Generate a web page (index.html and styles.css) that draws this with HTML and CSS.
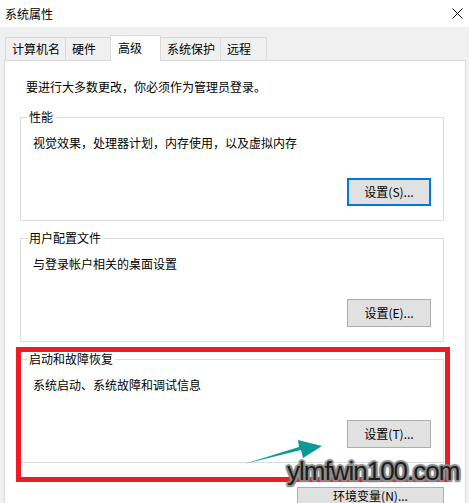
FILE: index.html
```html
<!DOCTYPE html>
<html lang="zh-CN">
<head>
<meta charset="utf-8">
<title>系统属性</title>
<link rel="stylesheet" href="styles.css">
</head>
<body>
<div class="window">
  <div class="titlebar">
    <span class="title">系统属性</span>
    <svg class="close" width="11" height="11" viewBox="0 0 11 11"><path d="M0.5 0.5 L10.5 10.5 M10.5 0.5 L0.5 10.5" stroke="#000" stroke-width="1" fill="none"/></svg>
  </div>
  <div class="content">
    <div class="tabs">
      <div class="tab">计算机名</div>
      <div class="tab">硬件</div>
      <div class="tab selected">高级</div>
      <div class="tab">系统保护</div>
      <div class="tab">远程</div>
    </div>
    <div class="panel">
      <p class="intro">要进行大多数更改，你必须作为管理员登录。</p>
      <div class="group">
        <span class="legend">性能</span>
        <p class="desc">视觉效果，处理器计划，内存使用，以及虚拟内存</p>
        <div class="actions"><button class="btn focused">设置(S)...</button></div>
      </div>
      <div class="group">
        <span class="legend">用户配置文件</span>
        <p class="desc">与登录帐户相关的桌面设置</p>
        <div class="actions"><button class="btn">设置(E)...</button></div>
      </div>
      <div class="group">
        <span class="legend">启动和故障恢复</span>
        <p class="desc">系统启动、系统故障和调试信息</p>
        <div class="actions"><button class="btn">设置(T)...</button></div>
      </div>
      <div class="actions bottom"><button class="btn wide">环境变量(N)...</button></div>
    </div>
  </div>
  <div class="highlight"></div>
  <svg class="arrow" width="90" height="34" viewBox="0 0 90 34"><polygon points="4,28 61,14 63,22 82,10 58,4 59,11" fill="#0c9a96"/></svg>
  <div class="watermark">ylmfwin100.com</div>
</div>
</body>
</html>
```
FILE: styles.css
```css
html, body {
  margin: 0;
  padding: 0;
  width: 469px;
  height: 503px;
  overflow: hidden;
  background: #f0f0f0;
}
.window {
  position: relative;
  width: 469px;
  height: 503px;
  overflow: hidden;
  font-family: "Noto Sans CJK SC", "Liberation Sans", sans-serif;
  font-size: 12px;
  line-height: 16px;
  color: #000;
}
.titlebar {
  height: 27px;
  background: #fff;
  display: flex;
  align-items: center;
  justify-content: space-between;
  padding: 0 6px 0 5px;
}
.title { font-size: 12px; }
.close { display: block; }
.content {
  padding-top: 8px;
}
.tabs {
  display: flex;
  align-items: flex-end;
  padding-left: 5px;
  height: 25px;
  position: relative;
  z-index: 1;
}
.tab {
  box-sizing: border-box;
  height: 23px;
  min-width: 47px;
  padding: 3px 5px 0 6px;
  border: 1px solid #d9d9d9;
  border-bottom: none;
  margin-right: -1px;
  background: #f0f0f0;
  white-space: nowrap;
}
.tab.selected {
  height: 26px;
  margin: 0 -1px -1px -1px;
  min-width: 51px;
  padding: 4px 7px 0 7px;
  background: #fff;
  position: relative;
  z-index: 2;
}
.panel {
  margin-left: 4px;
  width: 462px;
  box-sizing: border-box;
  border: 1px solid #d9d9d9;
  background: #fff;
  padding: 18px 21px 40px 15px;
}
.intro {
  margin: 0 0 22px 6px;
}
.group {
  position: relative;
  width: 424px;
  height: 104px;
  box-sizing: border-box;
  border: 1px solid #dcdcdc;
  padding: 17px 12px 0 12px;
  margin-bottom: 17px;
}
.legend {
  position: absolute;
  top: -9px;
  left: 7px;
  padding: 0 2px 0 1px;
  background: #fff;
}
.desc {
  margin: 0 0 27px 0;
}
.actions {
  display: flex;
  justify-content: flex-end;
}
.btn {
  box-sizing: border-box;
  width: 84px;
  height: 28px;
  background: #e1e1e1;
  border: 1px solid #adadad;
  font-family: "Noto Sans CJK SC", "Liberation Sans", sans-serif;
  font-size: 12px;
  line-height: 16px;
  color: #000;
  padding: 0;
  margin: 0;
}
.btn.focused {
  border: 2px solid #0078d7;
}
.bottom {
  width: 424px;
  margin-top: 24px;
}
.btn.wide {
  width: 147px;
  padding-bottom: 11px;
}
.highlight {
  position: absolute;
  left: 16px;
  top: 347px;
  width: 434px;
  height: 135px;
  box-sizing: border-box;
  border: 5px solid #ed1c24;
}
.arrow {
  position: absolute;
  left: 240px;
  top: 436px;
}
.watermark {
  position: absolute;
  left: 287px;
  top: 456px;
  font-family: "Liberation Sans", sans-serif;
  font-size: 26px;
  line-height: 30px;
  letter-spacing: -1px;
  color: #1c1c1c;
  text-shadow: 2px 0 1px #8c8c8c, -2px 0 1px #8c8c8c, 0 2px 1px #8c8c8c, 0 -2px 1px #8c8c8c,
    1.5px 1.5px 1px #8c8c8c, -1.5px 1.5px 1px #8c8c8c, 1.5px -1.5px 1px #8c8c8c, -1.5px -1.5px 1px #8c8c8c;
}
```
